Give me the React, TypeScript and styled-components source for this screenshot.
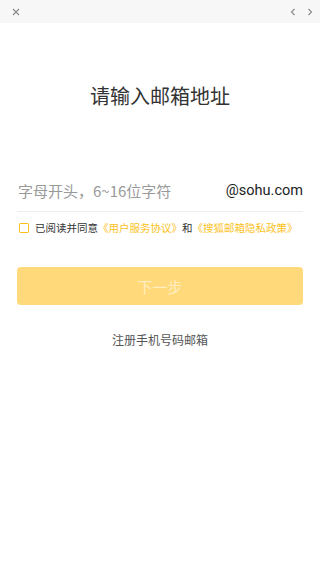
import React, { useState } from "react";
import styled, { createGlobalStyle } from "styled-components";

const GlobalStyle = createGlobalStyle`
  html, body {
    margin: 0;
    padding: 0;
    background: #ffffff;
    font-family: "Noto Sans CJK SC", "Noto Sans", sans-serif;
  }
  * {
    box-sizing: border-box;
  }
`;

const YELLOW = "#fcc224";

const Page = styled.div`
  width: 320px;
  min-height: 569px;
  background: #ffffff;
  display: flex;
  flex-direction: column;
`;

const TopBar = styled.div`
  height: 23px;
  background: #f7f7f7;
  display: flex;
  align-items: center;
  justify-content: space-between;
  padding: 0 6px 0 12px;
`;

const NavGroup = styled.div`
  display: flex;
  align-items: center;
  gap: 9px;
`;

const IconButton = styled.button`
  width: 8px;
  height: 8px;
  padding: 0;
  border: none;
  background: none;
  display: flex;
  align-items: center;
  justify-content: center;
  color: #888;
  cursor: pointer;
`;

const Body = styled.div`
  display: flex;
  flex-direction: column;
  padding: 0 17px;
`;

const Title = styled.h1`
  margin: 59px 0 0;
  font-size: 20px;
  line-height: 28px;
  font-weight: 400;
  color: #333;
  text-align: center;
`;

const InputRow = styled.label`
  margin-top: 60px;
  height: 42px;
  display: flex;
  align-items: center;
  border-bottom: 1px solid #eeeeee;
`;

const Input = styled.input`
  flex: 1;
  min-width: 0;
  border: none;
  outline: none;
  padding: 0 0 0 1px;
  font-family: "Noto Sans CJK SC", "Noto Sans", sans-serif;
  font-size: 15px;
  color: #333;
  background: transparent;
  &::placeholder {
    color: #999;
  }
`;

const Domain = styled.span`
  font-family: Roboto, "Noto Sans", sans-serif;
  font-size: 14.5px;
  color: #222;
`;

const AgreeRow = styled.div`
  margin-top: 10px;
  display: flex;
  align-items: center;
  font-size: 10.5px;
  line-height: 12px;
  color: #333;
  white-space: nowrap;
`;

const Checkbox = styled.span<{ $checked: boolean }>`
  width: 10px;
  height: 10px;
  margin: 0 6px 0 2px;
  border: 1.5px solid ${YELLOW};
  border-radius: 1px;
  background: ${(p) => (p.$checked ? YELLOW : "transparent")};
  cursor: pointer;
  flex-shrink: 0;
`;

const Link = styled.a`
  color: ${YELLOW};
  text-decoration: none;
`;

const NextButton = styled.button<{ $enabled: boolean }>`
  margin-top: 33px;
  height: 38px;
  border: none;
  border-radius: 4px;
  background: ${(p) => (p.$enabled ? "#ffc627" : "#ffd97a")};
  color: ${(p) => (p.$enabled ? "#fff" : "rgba(255,255,255,0.55)")};
  font-family: "Noto Sans CJK SC", "Noto Sans", sans-serif;
  font-size: 15px;
  cursor: pointer;
`;

const PhoneLink = styled.a`
  margin-top: 27px;
  font-size: 12px;
  line-height: 16px;
  color: #555;
  text-align: center;
  text-decoration: none;
`;

const CloseIcon = () => (
  <svg width="8" height="8" viewBox="0 0 8 8">
    <path d="M1 1L7 7M7 1L1 7" stroke="currentColor" strokeWidth="1.1" fill="none" />
  </svg>
);

const Chevron = ({ dir }: { dir: "left" | "right" }) => (
  <svg width="6" height="8" viewBox="0 0 6 8">
    <path
      d={dir === "left" ? "M4.5 1L1.5 4L4.5 7" : "M1.5 1L4.5 4L1.5 7"}
      stroke="currentColor"
      strokeWidth="1.1"
      fill="none"
    />
  </svg>
);

export default function App() {
  const [name, setName] = useState("");
  const [agreed, setAgreed] = useState(false);

  return (
    <Page>
      <GlobalStyle />
      <TopBar>
        <IconButton aria-label="关闭">
          <CloseIcon />
        </IconButton>
        <NavGroup>
          <IconButton aria-label="后退">
            <Chevron dir="left" />
          </IconButton>
          <IconButton aria-label="前进">
            <Chevron dir="right" />
          </IconButton>
        </NavGroup>
      </TopBar>
      <Body>
        <Title>请输入邮箱地址</Title>
        <InputRow>
          <Input
            value={name}
            onChange={(e) => setName(e.target.value)}
            placeholder="字母开头，6~16位字符"
          />
          <Domain>@sohu.com</Domain>
        </InputRow>
        <AgreeRow>
          <Checkbox $checked={agreed} onClick={() => setAgreed(!agreed)} />
          已阅读并同意
          <Link href="#">《用户服务协议》</Link>和
          <Link href="#">《搜狐邮箱隐私政策》</Link>
        </AgreeRow>
        <NextButton $enabled={agreed && name.length >= 6}>下一步</NextButton>
        <PhoneLink href="#">注册手机号码邮箱</PhoneLink>
      </Body>
    </Page>
  );
}
